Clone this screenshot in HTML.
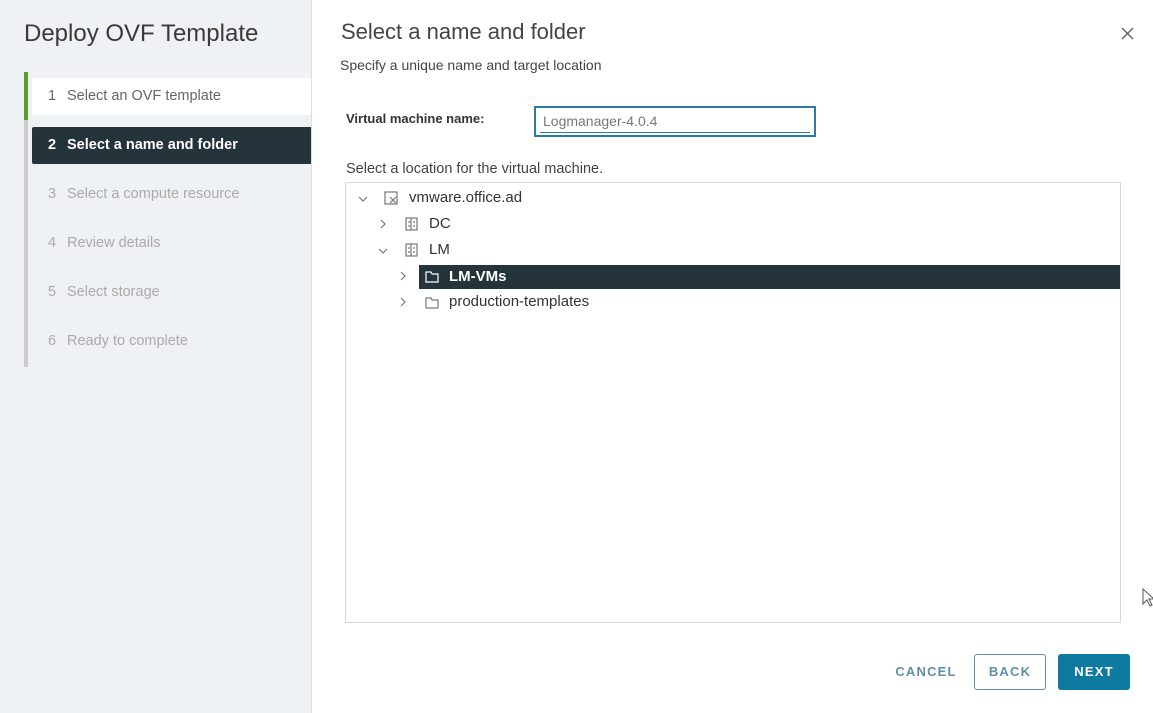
<!DOCTYPE html>
<html><head><style>
*{margin:0;padding:0;box-sizing:border-box}
body{width:1153px;height:713px;overflow:hidden;background:#fff;font-family:"Liberation Sans",sans-serif;position:relative}
.side{position:absolute;left:0;top:0;width:312px;height:713px;background:#eff2f5;border-right:1px solid #dcdfe2}
.title{position:absolute;left:24px;top:20px;font-size:24px;color:#3a3a3a}
.bar{position:absolute;left:24px;top:72px;width:4px;height:295px;background:#ccc}
.bar i{position:absolute;left:0;top:0;width:4px;height:48px;background:#5d9b2c}
.step{position:absolute;left:32px;width:279px;height:37px;font-size:14.5px;line-height:37px;padding-left:16px;color:#aaa}
.step b{display:inline-block;width:19px;font-weight:normal}
.s1{top:78px;background:#fff;color:#666}
.s2{top:127px;background:#25333b;color:#fff;font-weight:bold;border-radius:2px 0 0 2px}
.s2 b{font-weight:bold}
.h{position:absolute;left:341px;top:19px;font-size:22px;color:#444}
.sub{position:absolute;left:340px;top:57px;font-size:14px;color:#444}
.close{position:absolute;left:1120px;top:26px}
.lbl{position:absolute;left:346px;top:111px;font-size:13px;font-weight:bold;color:#333}
.inp{position:absolute;left:534px;top:106px;width:282px;height:31px;border:2px solid #2a7ba0;font-size:14px;color:#777;padding:5px 7px}
.inp u{position:absolute;left:4px;right:4px;bottom:2px;height:1px;background:#2a7ba0}
.loc{position:absolute;left:346px;top:161px;font-size:14.5px;color:#444}
.tree{position:absolute;left:345px;top:182px;width:776px;height:441px;border:1px solid #d6d6d6}
.row{position:absolute;height:24px;font-size:15px;color:#333;line-height:24px}
.sel{position:absolute;left:73px;top:82px;width:701px;height:24px;background:#25333b}
.btn{position:absolute;top:654px;height:36px;font-size:13px;font-weight:bold;letter-spacing:1.2px;line-height:36px;text-align:center;border-radius:3px}
</style></head><body>
<div class="side">
<div class="title">Deploy OVF Template</div>
<div class="bar"><i></i></div>
<div class="step s1"><b>1</b>Select an OVF template</div>
<div class="step s2"><b>2</b>Select a name and folder</div>
<div class="step" style="top:176px"><b>3</b>Select a compute resource</div>
<div class="step" style="top:225px"><b>4</b>Review details</div>
<div class="step" style="top:274px"><b>5</b>Select storage</div>
<div class="step" style="top:323px"><b>6</b>Ready to complete</div>
</div>
<div class="h">Select a name and folder</div>
<div class="sub">Specify a unique name and target location</div>
<svg class="close" width="15" height="15" viewBox="0 0 15 15"><path d="M2 2L13 13M13 2L2 13" stroke="#666" stroke-width="1.5"/></svg>
<div class="lbl">Virtual machine name:</div>
<div class="inp">Logmanager-4.0.4<u></u></div>
<div class="loc">Select a location for the virtual machine.</div>
<div class="tree">
<div class="sel"></div>
<svg style="position:absolute;left:0;top:0" width="120" height="130">
<g fill="none" stroke="#777" stroke-width="1.2">
<path d="M13 14l4 4 4-4"/>
<path d="M35 37l4 4-4 4"/>
<path d="M33 66l4 4 4-4"/>
<path d="M55 89l4 4-4 4"/>
<path d="M55 115l4 4-4 4"/>
<rect x="39" y="9" width="12" height="12"/><path d="M44 14l6 6M50 14l-6 6"/>
<rect x="60" y="35" width="11" height="12"/><path d="M65 35v12M62 39h2M62 43h2M67 39h2M67 43h2"/>
<rect x="60" y="61" width="11" height="12"/><path d="M65 61v12M62 65h2M62 69h2M67 65h2M67 69h2"/>
<path d="M80 89h5l1 2h6v8h-12z" stroke="#fff"/>
<path d="M80 115h5l1 2h6v8h-12z"/>
</g></svg>
<div class="row" style="left:63px;top:3px">vmware.office.ad</div>
<div class="row" style="left:83px;top:29px">DC</div>
<div class="row" style="left:83px;top:55px">LM</div>
<div class="row" style="left:103px;top:82px;color:#fff;font-weight:bold">LM-VMs</div>
<div class="row" style="left:103px;top:107px">production-templates</div>
</div>
<div class="btn" style="left:890px;width:72px;color:#5e90a8">CANCEL</div>
<div class="btn" style="left:974px;width:72px;border:1px solid #5e90a8;color:#5e90a8;line-height:34px">BACK</div>
<div class="btn" style="left:1058px;width:72px;background:#0e7aa0;color:#fff">NEXT</div>
<svg style="position:absolute;left:1142px;top:588px" width="12" height="20"><path d="M1 1v15l4-4 3 6 2-1-3-6h5z" fill="#fff" stroke="#555"/></svg>
</body></html>
